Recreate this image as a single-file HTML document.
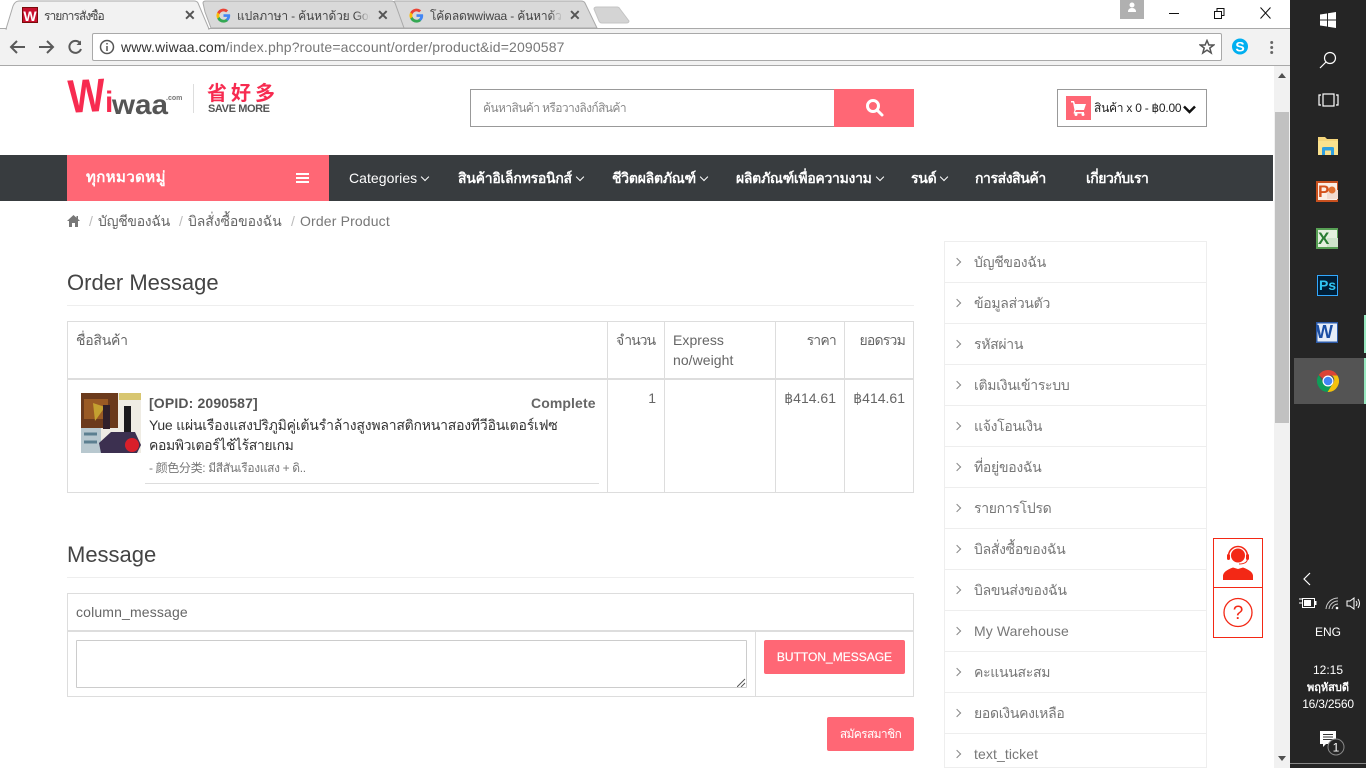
<!DOCTYPE html>
<html lang="th"><head><meta charset="utf-8"><title>รายการสั่งซื้อ</title>
<style>
*{box-sizing:border-box}
html,body{margin:0;width:1366px;height:768px;overflow:hidden;background:#fff;font-family:"Liberation Sans","Noto Sans CJK SC",sans-serif;font-size:14px;color:#666}
.t{position:absolute;white-space:nowrap;line-height:20px}
.b{position:absolute;background:#ddd}
.side{position:absolute;left:944px;width:263px;height:41px;border:1px solid #eee;border-top:0;color:#777;line-height:40px;padding-left:29px;white-space:nowrap;letter-spacing:-.3px}
.side:before{content:"";position:absolute;left:9px;top:17px;width:5px;height:5px;border-top:1px solid #888;border-right:1px solid #888;transform:rotate(45deg)}
.nav{position:absolute;top:168px;color:#fff;line-height:20px;white-space:nowrap;letter-spacing:-.25px}
.chev{display:inline-block;width:6px;height:6px;border-right:1.5px solid #fff;border-bottom:1.5px solid #fff;transform:rotate(45deg);margin:0 2px 3px 5px}
.tab{position:absolute;top:9px;font-size:12px;line-height:14px;white-space:nowrap;overflow:hidden;color:#444;letter-spacing:-.15px}
.fade:after{content:"";position:absolute;right:0;top:0;width:14px;height:14px;background:linear-gradient(90deg,rgba(217,217,217,0),#d9d9d9)}
.x{position:absolute;top:8px;font-size:14px;line-height:14px;color:#555;font-weight:bold}
</style></head><body>

<!-- browser chrome -->
<div class="b" style="left:0;top:28px;width:1290px;height:38px;background:#f2f2f2"></div>
<div class="b" style="left:0;top:28px;width:1290px;height:1px;background:#a9a9a9"></div>
<div class="b" style="left:0;top:65px;width:1290px;height:1px;background:#a9a9a9"></div>
<svg style="position:absolute;left:0;top:0" width="640" height="30">
<path d="M403 28 L398 14 L394 3 Q393 1 396 1 H581 Q584 1 585 3 L597 28Z" fill="#d9d9d9" stroke="#a9a9a9"/>
<path d="M211 28 L205 12 L203 3 Q203 1 206 1 H391 Q394 1 395 3 L404 28Z" fill="#d9d9d9" stroke="#a9a9a9"/>
<path d="M6 29 L13 6 Q15 1 19 1 H194 Q197 1 198 3 L209 29Z" fill="#f2f2f2" stroke="#a9a9a9"/>
<path d="M594 9 Q594 7 597 7 H617 Q619 7 620 9 L629 21 Q629 23 626 23 H602 Q600 23 599 21Z" fill="#d4d4d4" stroke="#c4c4c4"/>
</svg>
<div class="b" style="left:7px;top:28px;width:201px;height:2px;background:#f2f2f2"></div>
<div style="position:absolute;left:22px;top:7px;width:16px;height:16px;background:#c8102e;color:#fff;font:bold 14px/16px 'Liberation Sans',sans-serif;text-align:center;border:1px solid #7a0a0a">W</div>
<div class="tab" style="left:44px;width:80px;letter-spacing:-.95px">รายการสั่งซื้อ</div>
<div class="x" style="left:184px">✕</div>
<svg style="position:absolute;left:216px;top:8px" width="15" height="15" viewBox="0 0 18 18"><path d="M17 9.2c0-.6-.1-1.2-.2-1.7H9v3.2h4.500a3.800 3.800 0 0 1-1.700 2.500v2.100h2.700C16.100 13.800 17 11.700 17 9.200z" fill="#4285f4"/><path d="M9 17.500c2.300 0 4.200-.8 5.500-2.100l-2.700-2.100c-.7.500-1.700.8-2.800.8-2.200 0-4-1.500-4.700-3.400H1.500v2.200A8.500 8.500 0 0 0 9 17.500z" fill="#34a853"/><path d="M4.300 10.700a5 5 0 0 1 0-3.300V5.200H1.500a8.500 8.500 0 0 0 0 7.700z" fill="#fbbc05"/><path d="M9 4c1.200 0 2.300.4 3.200 1.200l2.400-2.400A8.500 8.500 0 0 0 1.500 5.200l2.800 2.200C5 5.500 6.800 4 9 4z" fill="#ea4335"/></svg>
<div class="tab fade" style="left:237px;width:133px">แปลภาษา - ค้นหาด้วย Google</div>
<div class="x" style="left:377px">✕</div>
<svg style="position:absolute;left:409px;top:8px" width="15" height="15" viewBox="0 0 18 18"><path d="M17 9.2c0-.6-.1-1.2-.2-1.7H9v3.200h4.500a3.800 3.800 0 0 1-1.700 2.500v2.100h2.700C16.100 13.800 17 11.700 17 9.200z" fill="#4285f4"/><path d="M9 17.500c2.300 0 4.200-.8 5.500-2.100l-2.700-2.100c-.7.500-1.700.8-2.800.8-2.200 0-4-1.500-4.700-3.400H1.500v2.200A8.500 8.500 0 0 0 9 17.500z" fill="#34a853"/><path d="M4.300 10.700a5 5 0 0 1 0-3.300V5.200H1.500a8.500 8.500 0 0 0 0 7.700z" fill="#fbbc05"/><path d="M9 4c1.200 0 2.300.4 3.200 1.200l2.400-2.400A8.500 8.500 0 0 0 1.500 5.200l2.800 2.200C5 5.500 6.800 4 9 4z" fill="#ea4335"/></svg>
<div class="tab fade" style="left:430px;width:133px">โค้ดลดพwiwaa - ค้นหาด้วย Google</div>
<div class="x" style="left:569px">✕</div>

<!-- window controls -->
<div class="b" style="left:1120px;top:0;width:24px;height:19px;background:#b0b0b0"></div>
<svg style="position:absolute;left:1125px;top:1px" width="14" height="12"><circle cx="7" cy="4" r="2.500" fill="#fff"/><path d="M3 11 Q3 7 7 7 Q11 7 11 11Z" fill="#fff"/></svg>
<svg style="position:absolute;left:1160px;top:4px" width="120" height="16" fill="none" stroke="#111"><path d="M9 9.500H19"/><path d="M54.500 7.500h7v7h-7zM57 7.500V4.500h7v7h-2.500"/><path d="M100.500 3.500 L110.500 14.500M110.500 3.500 L100.500 14.500"/></svg>

<!-- toolbar -->
<svg style="position:absolute;left:8px;top:37px" width="80" height="20" fill="none" stroke="#5a5a5a" stroke-width="2"><path d="M17 10H3M9 4L3 10L9 16"/><path d="M31 10H45M39 4L45 10L39 16"/><path d="M72 6A6 6 0 1 0 73 12"/><path d="M73 3.500V8H68.500" fill="#5a5a5a" stroke="none"/></svg>
<div class="b" style="left:92px;top:33px;width:1130px;height:28px;background:#fff;border:1px solid #a9a9a9;border-radius:2px"></div>
<svg style="position:absolute;left:99px;top:39px" width="16" height="16" fill="none" stroke="#555" stroke-width="1.500"><circle cx="8" cy="8" r="6.500"/><path d="M8 7V12M8 4V5.500"/></svg>
<div class="t" style="left:121px;top:37px;font-size:14px;color:#777;letter-spacing:.15px"><span style="color:#333">www.wiwaa.com</span>/index.php?route=account/order/product&amp;id=2090587</div>
<svg style="position:absolute;left:1199px;top:39px" width="16" height="16" fill="none" stroke="#555" stroke-width="1.500"><path d="M8 1.500L9.900 6H14.700L10.800 9L12.200 14L8 11.100L3.800 14L5.200 9L1.300 6H6.100Z"/></svg>
<svg style="position:absolute;left:1232px;top:38px" width="17" height="17"><circle cx="8" cy="8.500" r="8" fill="#00aff0"/><text x="8" y="13.500" font-family="Liberation Sans" font-size="14" font-weight="bold" fill="#fff" text-anchor="middle">S</text></svg>
<svg style="position:absolute;left:1270px;top:41px" width="4" height="14" fill="#666"><circle cx="1.700" cy="1.500" r="1.500"/><circle cx="1.700" cy="6.500" r="1.500"/><circle cx="1.700" cy="11.500" r="1.500"/></svg>

<!-- logo -->
<svg style="position:absolute;left:66px;top:72px" width="215" height="48">
<text x="2" y="40" transform="rotate(-3 20 24)" font-family="Liberation Sans,sans-serif" font-size="47" font-weight="bold" fill="#f72b50" textLength="37" lengthAdjust="spacingAndGlyphs">W</text>
<text x="39" y="40" font-family="Liberation Sans,sans-serif" font-size="30" font-weight="bold" fill="#f72b50">i</text>
<text x="46" y="42" font-family="Liberation Sans,sans-serif" font-size="28" font-weight="bold" fill="#555" textLength="56" lengthAdjust="spacingAndGlyphs">waa</text>
<text x="100" y="28" font-family="Liberation Sans,sans-serif" font-size="7" font-weight="bold" fill="#777">.com</text>
<rect x="127" y="12" width="1" height="29" fill="#ddd"/>
<text x="141" y="28" font-family="Noto Sans CJK SC,sans-serif" font-size="20" font-weight="bold" fill="#f72b50" textLength="68">省好多</text>
<text x="142" y="40" font-family="Liberation Sans,sans-serif" font-size="11" font-weight="bold" fill="#555" letter-spacing="-.4">SAVE MORE</text>
</svg>

<!-- search -->
<div class="b" style="left:470px;top:89px;width:365px;height:38px;background:#fff;border:1px solid #999"></div>
<div class="t" style="left:483px;top:98px;font-size:12px;color:#888;letter-spacing:-.6px">ค้นหาสินค้า หรือวางลิงก์สินค้า</div>
<div class="b" style="left:834px;top:89px;width:80px;height:38px;background:#ff6775"></div>
<svg style="position:absolute;left:865px;top:98px" width="20" height="20" fill="none" stroke="#fff" stroke-width="3"><circle cx="8" cy="8" r="5.500"/><path d="M12 12L17 17" stroke-linecap="round"/></svg>

<!-- cart -->
<div class="b" style="left:1057px;top:89px;width:150px;height:38px;background:#fff;border:1px solid #999"></div>
<div class="b" style="left:1066px;top:96px;width:25px;height:24px;background:#ff6775"></div>
<svg style="position:absolute;left:1070px;top:100px" width="17" height="16" fill="#fff"><path d="M1 1H4L5 4H16L14 10H6L5 12H14V13.500H3.500L4.500 10L3 2.500H1Z"/><circle cx="6" cy="14.500" r="1.500"/><circle cx="13" cy="14.500" r="1.500"/></svg>
<div class="t" style="left:1094px;top:98px;font-size:12px;color:#222;letter-spacing:-.25px">สินค้า x 0 - ฿0.00</div>
<svg style="position:absolute;left:1183px;top:105px" width="13" height="9" fill="none" stroke="#111" stroke-width="2.500"><path d="M1 1.500L6.500 7L12 1.500"/></svg>

<!-- nav -->
<div class="b" style="left:0;top:155px;width:1273px;height:46px;background:#383c3f"></div>
<div class="b" style="left:67px;top:155px;width:262px;height:46px;background:#ff6775"></div>
<div class="t" style="left:86px;top:168px;font-size:15px;font-weight:bold;color:#fff;letter-spacing:.4px">ทุกหมวดหมู่</div>
<div class="b" style="left:296px;top:173px;width:13px;height:2px;background:#fff"></div>
<div class="b" style="left:296px;top:177px;width:13px;height:2px;background:#fff"></div>
<div class="b" style="left:296px;top:181px;width:13px;height:2px;background:#fff"></div>
<div class="nav" style="left:349px;letter-spacing:.05px">Categories<span class="chev"></span></div>
<div class="nav" style="left:458px;font-weight:bold">สินค้าอิเล็กทรอนิกส์<span class="chev"></span></div>
<div class="nav" style="left:612px;font-weight:bold">ชีวิตผลิตภัณฑ์<span class="chev"></span></div>
<div class="nav" style="left:736px;font-weight:bold;letter-spacing:-.3px">ผลิตภัณฑ์เพื่อความงาม<span class="chev"></span></div>
<div class="nav" style="left:911px;font-weight:bold">รนด์<span class="chev"></span></div>
<div class="nav" style="left:975px;font-weight:bold;letter-spacing:-.42px">การส่งสินค้า</div>
<div class="nav" style="left:1086px;font-weight:bold;letter-spacing:-.5px">เกี่ยวกับเรา</div>

<!-- breadcrumb -->
<svg style="position:absolute;left:67px;top:215px" width="13" height="12" fill="#777"><path d="M6.500 0L9.500 2.700V1H11V4L13 6H11V12H8V8H5V12H2V6H0Z"/></svg>
<div class="t" style="left:89px;top:211px;color:#bbb">/</div>
<div class="t" style="left:98px;top:211px;letter-spacing:-.3px">บัญชีของฉัน</div>
<div class="t" style="left:179px;top:211px;color:#bbb">/</div>
<div class="t" style="left:188px;top:211px;letter-spacing:-.1px">บิลสั่งซื้อของฉัน</div>
<div class="t" style="left:291px;top:211px;color:#bbb">/</div>
<div class="t" style="left:300px;top:211px;color:#777;letter-spacing:.15px">Order Product</div>

<!-- order message -->
<div class="t" style="left:67px;top:270px;font-size:22px;line-height:26px;color:#444">Order Message</div>
<div class="b" style="left:67px;top:305px;width:847px;height:1px;background:#eee"></div>
<div style="position:absolute;left:67px;top:321px;width:847px;height:172px;border:1px solid #ddd"></div>
<div class="b" style="left:68px;top:378px;width:845px;height:2px"></div>
<div class="b" style="left:607px;top:322px;width:1px;height:170px"></div>
<div class="b" style="left:664px;top:322px;width:1px;height:170px"></div>
<div class="b" style="left:775px;top:322px;width:1px;height:170px"></div>
<div class="b" style="left:844px;top:322px;width:1px;height:170px"></div>
<div class="t" style="left:76px;top:330px;letter-spacing:-.25px">ชื่อสินค้า</div>
<div class="t" style="left:616px;top:330px;letter-spacing:-1px">จำนวน</div>
<div class="t" style="left:673px;top:330px;letter-spacing:.05px">Express<br>no/weight</div>
<div class="t" style="left:776px;top:330px;width:60px;text-align:right;letter-spacing:-.8px">ราคา</div>
<div class="t" style="left:845px;top:330px;width:60px;text-align:right;letter-spacing:-.8px">ยอดรวม</div>
<svg style="position:absolute;left:81px;top:393px" width="60" height="60"><rect width="60" height="60" fill="#efece4"/><rect width="37" height="35" fill="#6b3a1c"/><rect x="3" y="6" width="24" height="20" fill="#9a5a24"/><path d="M12 10L24 14L14 28Z" fill="#c4a030"/><rect x="38" y="0" width="22" height="7" fill="#d8c670"/><rect x="22" y="12" width="7" height="24" fill="#30202a"/><rect x="43" y="13" width="7" height="26" fill="#1c1a1e"/><rect y="35" width="20" height="25" fill="#b8c8cf"/><path d="M3 41H16M3 49H16" stroke="#5c7f90" stroke-width="3"/><path d="M18 50L30 39H54L60 52L56 60H20Z" fill="#3c3050"/><circle cx="51" cy="52" r="7" fill="#d81f2a"/></svg>
<div class="t" style="left:149px;top:393px;font-weight:bold;color:#555;letter-spacing:.15px">[OPID: 2090587]</div>
<div class="t" style="left:531px;top:393px;font-weight:bold;color:#666;letter-spacing:.1px">Complete</div>
<div class="t" style="left:149px;top:415px;color:#333;letter-spacing:-.22px">Yue แผ่นเรืองแสงปริภูมิคู่เต้นรำล้างสูงพลาสติกหนาสองทีวีอินเตอร์เฟซ</div>
<div class="t" style="left:149px;top:435px;color:#333;letter-spacing:-.4px">คอมพิวเตอร์ไช้ไร้สายเกม</div>
<div class="t" style="left:149px;top:458px;font-size:12px;color:#777;letter-spacing:-.35px">- 颜色分类: มีสีสันเรืองแสง + ดิ..</div>
<div class="b" style="left:145px;top:483px;width:454px;height:1px"></div>
<div class="t" style="left:608px;top:388px;width:48px;text-align:right">1</div>
<div class="t" style="left:776px;top:388px;width:60px;text-align:right">฿414.61</div>
<div class="t" style="left:845px;top:388px;width:60px;text-align:right">฿414.61</div>

<!-- message -->
<div class="t" style="left:67px;top:542px;font-size:22px;line-height:26px;color:#444">Message</div>
<div class="b" style="left:67px;top:577px;width:847px;height:1px;background:#eee"></div>
<div style="position:absolute;left:67px;top:593px;width:847px;height:104px;border:1px solid #ddd"></div>
<div class="b" style="left:68px;top:630px;width:845px;height:2px"></div>
<div class="b" style="left:755px;top:632px;width:1px;height:64px"></div>
<div class="t" style="left:76px;top:602px;letter-spacing:.15px">column_message</div>
<div style="position:absolute;left:76px;top:640px;width:671px;height:48px;border:1px solid #ccc;border-radius:1px"></div>
<svg style="position:absolute;left:737px;top:678px" width="9" height="9" stroke="#555" fill="none"><path d="M0 9L8 1M4 9L8 5"/></svg>
<div class="b" style="left:764px;top:640px;width:141px;height:34px;background:#ff6775;border-radius:2px;color:#fff;font-size:12px;line-height:34px;text-align:center;-webkit-text-stroke:.2px #fff">BUTTON_MESSAGE</div>
<div class="b" style="left:827px;top:717px;width:87px;height:34px;background:#ff6775;border-radius:2px;color:#fff;font-size:12px;line-height:34px;text-align:center;letter-spacing:-.65px">สมัครสมาชิก</div>

<!-- sidebar -->
<div class="side" style="top:241px;height:42px;border-top:1px solid #eee">บัญชีของฉัน</div>
<div class="side" style="top:283px">ข้อมูลส่วนตัว</div>
<div class="side" style="top:324px">รหัสผ่าน</div>
<div class="side" style="top:365px">เติมเงินเข้าระบบ</div>
<div class="side" style="top:406px">แจ้งโอนเงิน</div>
<div class="side" style="top:447px">ที่อยู่ของฉัน</div>
<div class="side" style="top:488px">รายการโปรด</div>
<div class="side" style="top:529px">บิลสั่งซื้อของฉัน</div>
<div class="side" style="top:570px">บิลขนส่งของฉัน</div>
<div class="side" style="top:611px;letter-spacing:.1px">My Warehouse</div>
<div class="side" style="top:652px">คะแนนสะสม</div>
<div class="side" style="top:693px">ยอดเงินคงเหลือ</div>
<div class="side" style="top:734px;height:34px;letter-spacing:.1px">text_ticket</div>

<!-- floating -->
<div style="position:absolute;left:1213px;top:538px;width:50px;height:100px;border:1px solid #f32815;background:#fff"></div>
<div class="b" style="left:1213px;top:587px;width:50px;height:1px;background:#f32815"></div>
<svg style="position:absolute;left:1220px;top:544px" width="36" height="38"><circle cx="18" cy="11.500" r="7" fill="#f32815"/><path d="M8.500 12A9.500 9.500 0 0 1 27.500 12" fill="none" stroke="#f32815" stroke-width="1.500"/><rect x="7" y="10" width="3" height="6" rx="1.500" fill="#f32815"/><rect x="26" y="10" width="3" height="6" rx="1.500" fill="#f32815"/><path d="M27.500 15Q27 20 19 20" fill="none" stroke="#f32815"/><path d="M3 36V32Q3 27 13 23.500L18 25L23 23.500Q33 27 33 32V36Z" fill="#f32815"/></svg>
<svg style="position:absolute;left:1222px;top:597px" width="32" height="32"><circle cx="16" cy="15.500" r="14" fill="none" stroke="#f32815" stroke-width="1.300"/><text x="16" y="22" font-family="Liberation Sans" font-size="19" fill="#f32815" text-anchor="middle">?</text></svg>

<!-- scrollbar -->
<div class="b" style="left:1274px;top:66px;width:16px;height:702px;background:#f1f1f1"></div>
<div class="b" style="left:1275px;top:112px;width:14px;height:311px;background:#c1c1c1"></div>
<svg style="position:absolute;left:1274px;top:66px" width="16" height="702" fill="#505050"><path d="M4 12L8 7L12 12Z"/><path d="M4 690L8 695L12 690Z"/></svg>

<!-- taskbar -->
<div class="b" style="left:1290px;top:0;width:76px;height:768px;background:#252525"></div>
<div class="b" style="left:1294px;top:358px;width:70px;height:46px;background:#545454"></div>
<div class="b" style="left:1364px;top:315px;width:2px;height:38px;background:#98e8c0"></div>
<div class="b" style="left:1364px;top:358px;width:2px;height:46px;background:#98e8c0"></div>
<svg style="position:absolute;left:1320px;top:12px" width="17" height="16" fill="#fff"><path d="M0 2.500L7 1.500V7.500H0ZM8 1.300L16 0V7.500H8ZM0 8.500H7V14.500L0 13.500ZM8 8.500H16V16L8 14.800Z"/></svg>
<svg style="position:absolute;left:1319px;top:51px" width="18" height="18" fill="none" stroke="#fff" stroke-width="1.200"><circle cx="11" cy="7" r="5.500"/><path d="M7 11L1 17"/></svg>
<svg style="position:absolute;left:1318px;top:93px" width="21" height="14" fill="none" stroke="#fff" stroke-width="1.200"><rect x="5" y="1" width="11" height="12"/><path d="M3 2H1V12H3M18 2H20V12H18"/></svg>
<svg style="position:absolute;left:1316px;top:136px" width="24" height="20"><path d="M2 1H9L11 3H22V19H2Z" fill="#f5d67c"/><rect x="2" y="5" width="20" height="14" fill="#fbe28e"/><path d="M6 19V12Q6 11 8 11H16Q18 11 18 12V19H15V14.500H9V19Z" fill="#2f9fe0"/></svg>
<svg style="position:absolute;left:1316px;top:181px" width="24" height="22"><rect width="22" height="21" fill="#c8501e"/><rect x="2" y="2" width="19" height="17" fill="#fbeee4"/><rect x="11" y="9" width="11" height="9" fill="#f2dbcf"/><circle cx="16" cy="9" r="3.500" fill="#e07030"/><text x="2" y="16" font-family="Liberation Sans" font-size="17" font-weight="bold" fill="#d4521c">P</text></svg>
<svg style="position:absolute;left:1316px;top:228px" width="24" height="22"><rect width="22" height="21" fill="#58a055"/><rect x="2" y="2" width="19" height="17" fill="#e5f0df"/><rect x="11" y="10" width="11" height="9" fill="#cfe4cb"/><text x="2" y="16" font-family="Liberation Sans" font-size="17" font-weight="bold" fill="#2a7d33">X</text></svg>
<div style="position:absolute;left:1317px;top:275px;width:21px;height:21px;background:#001e36;border:1px solid #31a8ff;color:#31c5f0;font:bold 14px/19px 'Liberation Sans',sans-serif;text-align:center">Ps</div>
<svg style="position:absolute;left:1316px;top:322px" width="24" height="22"><rect width="22" height="21" fill="#2c5aa8"/><rect x="1.500" y="1.500" width="19.500" height="18" fill="#e6edf8"/><text x="0" y="16" font-family="Liberation Sans" font-size="18" font-weight="bold" fill="#1b4ea3">W</text></svg>
<svg style="position:absolute;left:1317px;top:370px" width="22" height="22" viewBox="0 0 22 22"><path d="M11 0A11 11 0 0 1 20.500 5.500H11A5.500 5.500 0 0 0 6 8.800L1.800 5A11 11 0 0 1 11 0Z" fill="#db4437"/><path d="M20.500 5.500A11 11 0 0 1 10.500 22L15.600 13.800A5.500 5.500 0 0 0 15 5.500Z" fill="#f4c20d"/><path d="M1.800 5L6.700 13.800A5.500 5.500 0 0 0 15.600 13.800L10.500 22A11 11 0 0 1 1.800 5Z" fill="#0f9d58"/><circle cx="11" cy="11" r="5.500" fill="#fff"/><circle cx="11" cy="11" r="4.300" fill="#4285f4"/></svg>

<svg style="position:absolute;left:1302px;top:572px" width="10" height="14" fill="none" stroke="#fff" stroke-width="1.200"><path d="M8 1L2 7L8 13"/></svg>
<svg style="position:absolute;left:1298px;top:595px" width="68" height="16" fill="none" stroke="#fff"><path d="M1 4H4M1 8H4" stroke-width="1"/><rect x="4.500" y="3.500" width="12" height="9"/><rect x="6" y="5" width="7" height="6" fill="#fff" stroke="none"/><rect x="17" y="6" width="1.500" height="4" fill="#fff" stroke="none"/><path d="M28 14A12 12 0 0 1 40 3M31 14A9 9 0 0 1 40 6M34 14A6 6 0 0 1 40 9" stroke="#ccc"/><circle cx="39" cy="13" r="1.300" fill="#fff" stroke="none"/><path d="M49 6H52L56 3V14L52 11H49ZM58 6Q60 8.500 58 11M60 4Q63 8.500 60 13" stroke-width="1"/></svg>
<div class="t" style="left:1290px;top:622px;width:76px;text-align:center;font-size:12px;color:#fff;line-height:20px">ENG</div>
<div class="t" style="left:1290px;top:662px;width:76px;text-align:center;font-size:12px;color:#fff;line-height:16px">12:15</div>
<div class="t" style="left:1290px;top:680px;width:76px;text-align:center;font-size:11px;font-weight:bold;color:#fff;line-height:16px">พฤหัสบดี</div>
<div class="t" style="left:1290px;top:696px;width:76px;text-align:center;font-size:12px;color:#fff;line-height:16px;letter-spacing:-.2px">16/3/2560</div>
<svg style="position:absolute;left:1318px;top:729px" width="28" height="28"><path d="M2 2H18V15H8L5 18V15H2Z" fill="#fff"/><path d="M5 5.500H15M5 8H15M5 10.500H15" stroke="#333"/><circle cx="18" cy="18" r="8" fill="#252525" stroke="#888"/><text x="18" y="22.500" font-family="Liberation Sans" font-size="12" fill="#fff" text-anchor="middle">1</text></svg>
<div class="b" style="left:1290px;top:763px;width:76px;height:1px;background:#888"></div>
</body></html>
